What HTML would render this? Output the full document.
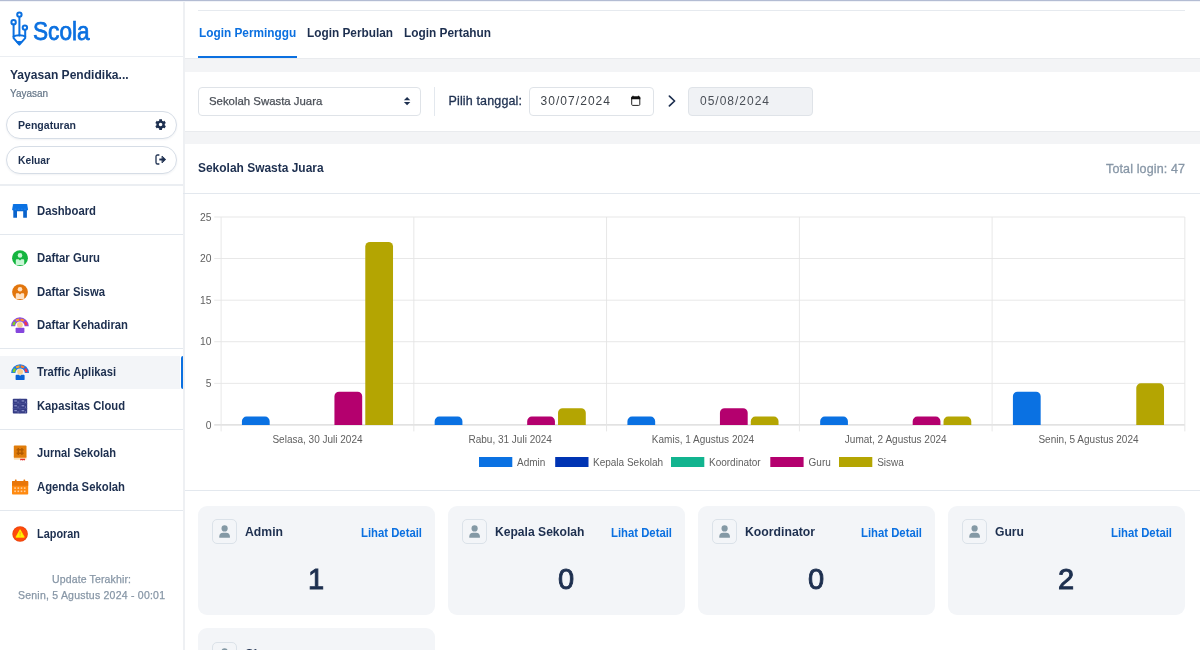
<!DOCTYPE html>
<html lang="id"><head><meta charset="utf-8"><title>Scola - Traffic Aplikasi</title>
<style>
*{box-sizing:border-box;margin:0;padding:0}
html,body{width:1200px;height:650px;overflow:hidden;background:#fff}
body{position:relative;font-family:"Liberation Sans",sans-serif;color:#1d2f4f}
.t{position:absolute;transform-origin:0 50%;white-space:nowrap;line-height:20px;height:20px;font-family:"Liberation Sans",sans-serif}
.b{position:absolute}
.hl{position:absolute;height:1px;background:#e3e8ee}
.pill{position:absolute;left:6px;width:171px;height:28px;border:1px solid #d6dde6;border-radius:14px;background:#fff;box-shadow:0 1px 2px rgba(30,50,80,.06)}
.inp{position:absolute;top:86.6px;height:29px;border:1px solid #dfe3e8;border-radius:4px;background:#fff}
.card{position:absolute;width:237px;height:109px;background:#f3f5f8;border-radius:9px}
.ico{position:absolute;left:13.5px;top:13.3px;width:25px;height:25px;border:1px solid #dbe2e9;border-radius:5px;background:#f3f5f8}
svg{position:absolute;overflow:visible}
svg text{font-family:"Liberation Sans",sans-serif}
#app{position:absolute;left:0;top:0;width:1200px;height:650px;will-change:transform}

</style></head>
<body>
<div id="app">
<!-- top strip -->
<div class="b" style="left:0;top:0;width:1200px;height:1px;background:#b3bcd3"></div>
<div class="b" style="left:0;top:1px;width:1200px;height:1px;background:#f1f3f8"></div>

<!-- main background bands -->
<div class="b" style="left:185px;top:58.2px;width:1015px;height:13.7px;background:#f3f4f6;border-top:1px solid #e9ebee"></div>
<div class="b" style="left:185px;top:131px;width:1015px;height:13.1px;background:#f3f4f6;border-top:1px solid #e9ebee"></div>

<!-- sidebar -->
<div class="b" style="left:183px;top:2px;width:2px;height:648px;background:#eef0f3"></div>
<div class="hl" style="left:0;top:55.5px;width:183px;height:1.5px;background:#ebeef2"></div>
<div class="hl" style="left:0;top:184.2px;width:183px;height:1.6px;background:#ebeef2"></div>
<div class="hl" style="left:0;top:234px;width:183px"></div>
<div class="hl" style="left:0;top:348px;width:183px"></div>
<div class="hl" style="left:0;top:429px;width:183px"></div>
<div class="hl" style="left:0;top:510px;width:183px"></div>
<div class="b" style="left:0;top:355.7px;width:179.5px;height:33.1px;background:#f3f5f8"></div>
<div class="b" style="left:180.8px;top:355.7px;width:2.6px;height:33.3px;background:#0b70e0;border-radius:2.5px 0 0 2.5px"></div>
<div class="pill" style="top:111px"></div>
<div class="pill" style="top:146px"></div>

<!-- tabs -->
<div class="hl" style="left:198px;top:10px;width:987px;background:#e6eaef"></div>
<div class="b" style="left:198px;top:56px;width:99px;height:2px;background:#0b70e0"></div>

<!-- filters -->
<div class="inp" style="left:198px;width:223px"></div>
<div class="b" style="left:434px;top:86.6px;width:1px;height:29px;background:#e3e8ee"></div>
<div class="inp" style="left:529px;width:125px"></div>
<div class="inp" style="left:688px;width:125px;background:#f0f2f5"></div>

<!-- chart header -->
<div class="hl" style="left:183px;top:193px;width:1017px"></div>
<div class="hl" style="left:185px;top:490px;width:1015px"></div>

<!-- cards -->
<div class="card" style="left:198px;top:506.1px"><div class="ico"><svg width="25" height="25" viewBox="0 0 25 25" style="left:-1px;top:-1px"><circle cx="12.600" cy="9.400" r="3.100" fill="#8499a5"/><path d="M7.300 18.800V17.600Q7.300 13.800 11.100 13.800H14.100Q17.900 13.800 17.900 17.600V18.800Z" fill="#8499a5"/></svg></div></div>
<div class="card" style="left:448px;top:506.1px"><div class="ico"><svg width="25" height="25" viewBox="0 0 25 25" style="left:-1px;top:-1px"><circle cx="12.600" cy="9.400" r="3.100" fill="#8499a5"/><path d="M7.300 18.800V17.600Q7.300 13.800 11.100 13.800H14.100Q17.900 13.800 17.900 17.600V18.800Z" fill="#8499a5"/></svg></div></div>
<div class="card" style="left:698px;top:506.1px"><div class="ico"><svg width="25" height="25" viewBox="0 0 25 25" style="left:-1px;top:-1px"><circle cx="12.600" cy="9.400" r="3.100" fill="#8499a5"/><path d="M7.300 18.800V17.600Q7.300 13.800 11.100 13.800H14.100Q17.900 13.800 17.900 17.600V18.800Z" fill="#8499a5"/></svg></div></div>
<div class="card" style="left:948px;top:506.1px"><div class="ico"><svg width="25" height="25" viewBox="0 0 25 25" style="left:-1px;top:-1px"><circle cx="12.600" cy="9.400" r="3.100" fill="#8499a5"/><path d="M7.300 18.800V17.600Q7.300 13.800 11.100 13.800H14.100Q17.900 13.800 17.900 17.600V18.800Z" fill="#8499a5"/></svg></div></div>
<div class="card" style="left:198px;top:628.3px"><div class="ico"><svg width="25" height="25" viewBox="0 0 25 25" style="left:-1px;top:-1px"><circle cx="12.600" cy="9.400" r="3.100" fill="#8499a5"/><path d="M7.300 18.800V17.600Q7.300 13.800 11.100 13.800H14.100Q17.900 13.800 17.900 17.600V18.800Z" fill="#8499a5"/></svg></div></div>
<svg width="1200" height="650" viewBox="0 0 1200 650" style="left:0;top:0">
<rect x="214.2" y="424.25" width="970.6" height="1.3" fill="#d9d9d9"/>
<rect x="214.2" y="382.87" width="970.6" height="0.9" fill="#e5e5e5"/>
<rect x="214.2" y="341.29" width="970.6" height="0.9" fill="#e5e5e5"/>
<rect x="214.2" y="299.71" width="970.6" height="0.9" fill="#e5e5e5"/>
<rect x="214.2" y="258.13" width="970.6" height="0.9" fill="#e5e5e5"/>
<rect x="214.2" y="216.55" width="970.6" height="0.9" fill="#e5e5e5"/>
<rect x="220.65" y="217.0" width="0.9" height="214.4" fill="#e5e5e5"/>
<rect x="413.40" y="217.0" width="0.9" height="214.4" fill="#e5e5e5"/>
<rect x="606.15" y="217.0" width="0.9" height="214.4" fill="#e5e5e5"/>
<rect x="798.90" y="217.0" width="0.9" height="214.4" fill="#e5e5e5"/>
<rect x="991.65" y="217.0" width="0.9" height="214.4" fill="#e5e5e5"/>
<rect x="1184.40" y="217.0" width="0.9" height="214.4" fill="#e5e5e5"/>
<text x="211.5" y="428.5" font-size="10.3" fill="#606060" text-anchor="end">0</text>
<text x="211.5" y="386.9" font-size="10.3" fill="#606060" text-anchor="end">5</text>
<text x="211.5" y="345.3" font-size="10.3" fill="#606060" text-anchor="end">10</text>
<text x="211.5" y="303.8" font-size="10.3" fill="#606060" text-anchor="end">15</text>
<text x="211.5" y="262.2" font-size="10.3" fill="#606060" text-anchor="end">20</text>
<text x="211.5" y="220.6" font-size="10.3" fill="#606060" text-anchor="end">25</text>
<path d="M241.92 424.90V421.18A4.60 4.60 0 0 1 246.52 416.58H265.07A4.60 4.60 0 0 1 269.67 421.18V424.90Z" fill="#0a71e2"/>
<path d="M334.44 424.90V396.24A4.60 4.60 0 0 1 339.04 391.64H357.59A4.60 4.60 0 0 1 362.19 396.24V424.90Z" fill="#b4006e"/>
<path d="M365.28 424.90V246.55A4.60 4.60 0 0 1 369.88 241.95H388.43A4.60 4.60 0 0 1 393.03 246.55V424.90Z" fill="#b4a502"/>
<path d="M434.67 424.90V421.18A4.60 4.60 0 0 1 439.27 416.58H457.82A4.60 4.60 0 0 1 462.42 421.18V424.90Z" fill="#0a71e2"/>
<path d="M527.19 424.90V421.18A4.60 4.60 0 0 1 531.79 416.58H550.34A4.60 4.60 0 0 1 554.94 421.18V424.90Z" fill="#b4006e"/>
<path d="M558.03 424.90V412.87A4.60 4.60 0 0 1 562.63 408.27H581.18A4.60 4.60 0 0 1 585.78 412.87V424.90Z" fill="#b4a502"/>
<path d="M627.42 424.90V421.18A4.60 4.60 0 0 1 632.02 416.58H650.57A4.60 4.60 0 0 1 655.17 421.18V424.90Z" fill="#0a71e2"/>
<path d="M719.94 424.90V412.87A4.60 4.60 0 0 1 724.54 408.27H743.09A4.60 4.60 0 0 1 747.69 412.87V424.90Z" fill="#b4006e"/>
<path d="M750.78 424.90V421.18A4.60 4.60 0 0 1 755.38 416.58H773.93A4.60 4.60 0 0 1 778.53 421.18V424.90Z" fill="#b4a502"/>
<path d="M820.17 424.90V421.18A4.60 4.60 0 0 1 824.77 416.58H843.32A4.60 4.60 0 0 1 847.92 421.18V424.90Z" fill="#0a71e2"/>
<path d="M912.69 424.90V421.18A4.60 4.60 0 0 1 917.29 416.58H935.84A4.60 4.60 0 0 1 940.44 421.18V424.90Z" fill="#b4006e"/>
<path d="M943.53 424.90V421.18A4.60 4.60 0 0 1 948.13 416.58H966.68A4.60 4.60 0 0 1 971.28 421.18V424.90Z" fill="#b4a502"/>
<path d="M1012.92 424.90V396.24A4.60 4.60 0 0 1 1017.52 391.64H1036.07A4.60 4.60 0 0 1 1040.67 396.24V424.90Z" fill="#0a71e2"/>
<path d="M1136.28 424.90V387.92A4.60 4.60 0 0 1 1140.88 383.32H1159.43A4.60 4.60 0 0 1 1164.03 387.92V424.90Z" fill="#b4a502"/>
<text x="317.5" y="443.4" font-size="10" fill="#606060" text-anchor="middle">Selasa, 30 Juli 2024</text>
<text x="510.2" y="443.4" font-size="10" fill="#606060" text-anchor="middle">Rabu, 31 Juli 2024</text>
<text x="703.0" y="443.4" font-size="10" fill="#606060" text-anchor="middle">Kamis, 1 Agustus 2024</text>
<text x="895.7" y="443.4" font-size="10" fill="#606060" text-anchor="middle">Jumat, 2 Agustus 2024</text>
<text x="1088.5" y="443.4" font-size="10" fill="#606060" text-anchor="middle">Senin, 5 Agustus 2024</text>
<rect x="479" y="457" width="33.3" height="10" fill="#0a71e2"/>
<text x="517" y="465.6" font-size="10" fill="#606060">Admin</text>
<rect x="555.2" y="457" width="33.3" height="10" fill="#0034b3"/>
<text x="593" y="465.6" font-size="10" fill="#606060">Kepala Sekolah</text>
<rect x="671" y="457" width="33.3" height="10" fill="#12b48f"/>
<text x="709" y="465.6" font-size="10" fill="#606060">Koordinator</text>
<rect x="770.3" y="457" width="33.3" height="10" fill="#b4006e"/>
<text x="808.6" y="465.6" font-size="10" fill="#606060">Guru</text>
<rect x="839" y="457" width="33.3" height="10" fill="#b4a502"/>
<text x="877.2" y="465.6" font-size="10" fill="#606060">Siswa</text>
</svg>
<!-- logo icon -->
<svg width="22" height="38" viewBox="8 9 22 38" style="left:8px;top:9px" fill="none" stroke="#0b70e0" stroke-width="2" stroke-linecap="round" stroke-linejoin="round">
<circle cx="19.4" cy="14.6" r="2.2"/><circle cx="13.6" cy="22.3" r="2.2"/><circle cx="24.9" cy="27.6" r="2.2"/>
<path d="M19.4 16.9V35.4M13.6 24.6V38.2L19.4 44.6L25.2 38.2V29.9"/>
<path d="M13.6 36.6C15.6 34.9 23.2 34.9 25.2 36.6"/>
<path d="M16.6 41.6H22.2L19.4 44.6Z" fill="#0b70e0" stroke-width="1"/>
</svg>

<!-- gear -->
<svg width="11.2" height="11.2" viewBox="0 0 512 512" style="left:154.7px;top:118.7px"><path fill="#1d2f4f" d="M487.4 315.700l-42.600-24.600c4.300-23.200 4.300-47 0-70.200l42.600-24.600c4.900-2.800 7.100-8.600 5.500-14-11.100-35.600-30-67.800-54.700-94.600-3.800-4.100-10-5.100-14.800-2.300L380.800 110c-17.900-15.400-38.500-27.300-60.800-35.100V25.800c0-5.600-3.900-10.500-9.400-11.700-36.700-8.200-74.300-7.800-109.200 0-5.500 1.200-9.400 6.100-9.400 11.700V75c-22.200 7.900-42.800 19.800-60.800 35.100L88.700 85.500c-4.900-2.800-11-1.900-14.800 2.300-24.700 26.700-43.600 58.900-54.700 94.600-1.700 5.400.6 11.200 5.500 14L67.300 221c-4.300 23.200-4.300 47 0 70.200l-42.600 24.600c-4.900 2.800-7.100 8.600-5.500 14 11.100 35.600 30 67.800 54.700 94.600 3.800 4.100 10 5.100 14.800 2.300l42.600-24.600c17.900 15.400 38.500 27.300 60.800 35.100v49.200c0 5.600 3.900 10.500 9.400 11.700 36.700 8.200 74.300 7.800 109.200 0 5.500-1.200 9.400-6.100 9.400-11.700v-49.200c22.200-7.900 42.800-19.800 60.800-35.100l42.600 24.600c4.900 2.800 11 1.900 14.800-2.300 24.700-26.700 43.600-58.900 54.700-94.600 1.500-5.500-.7-11.300-5.600-14.100zM256 336c-44.100 0-80-35.900-80-80s35.900-80 80-80 80 35.900 80 80-35.900 80-80 80z"/></svg>

<!-- logout -->
<svg width="12" height="11" viewBox="0 0 12 11" style="left:154.5px;top:153.7px" fill="none" stroke="#1d2f4f" stroke-linecap="round" stroke-linejoin="round">
<path d="M3.9 1H2.6Q1 1 1 2.6V8.4Q1 10 2.6 10H3.9" stroke-width="1.3"/>
<path d="M4.3 5.5H8.6" stroke-width="1.9" stroke-linecap="butt"/>
<path d="M7.3 2.3L10.7 5.5L7.3 8.700Z" fill="#1d2f4f" stroke-width="0.8"/>
</svg>

<!-- dashboard -->
<svg width="18" height="16" viewBox="11 203 18 16" style="left:11px;top:203px">
<path d="M13.300 210H26.900V217.800H23.200V211.300H17V217.800H13.300Z" fill="#0a63cb"/>
<path d="M13.600 204H26.600Q27.100 204 27.200 204.500L28 209.200Q28 210.400 26.800 210.400H13.400Q12.200 210.400 12.200 209.200L13 204.500Q13.100 204 13.600 204Z" fill="#0b72e3"/>
<path d="M14.600 209.200H16.200M17.800 209.200H19.400M21 209.200H22.600M24.200 209.200H25.800" stroke="#3b8eee" stroke-width="0.600"/>
</svg>

<!-- daftar guru -->
<svg width="18" height="18" viewBox="11 249 18 18" style="left:11px;top:249.300px">
<circle cx="20" cy="258.200" r="7.900" fill="#14b53f"/>
<circle cx="20" cy="255.400" r="2.300" fill="#c9f7d6"/>
<path d="M16.800 259.300H18.700L20 260.500L21.300 259.300H23.200Q24.200 259.300 24.200 260.300V264Q24.200 265 23.200 265H16.800Q15.800 265 15.800 264V260.300Q15.800 259.300 16.800 259.300Z" fill="#c9f7d6"/>
</svg>

<!-- daftar siswa -->
<svg width="18" height="18" viewBox="11 282.500 18 18" style="left:11px;top:282.700px">
<circle cx="20" cy="291.600" r="7.900" fill="#e2760d"/>
<circle cx="20" cy="288.800" r="2.300" fill="#ffe2c4"/>
<path d="M16.800 292.700H18.700L20 293.900L21.300 292.700H23.200Q24.200 292.700 24.200 293.700V297.400Q24.200 298.400 23.200 298.400H16.800Q15.800 298.400 15.800 297.400V293.700Q15.800 292.700 16.800 292.700Z" fill="#ffe2c4"/>
</svg>

<!-- daftar kehadiran -->
<svg width="20" height="18" viewBox="10 316 20 18" style="left:10px;top:316px">
<path d="M11 326.200A8.900 8.900 0 0 1 28.800 326.200H24.600A4.700 4.700 0 0 0 15.200 326.200Z" fill="#8a4ae0"/>
<path d="M12.300 325.300A7.600 7.600 0 0 1 13.900 321.200L15.800 322.600A5.300 5.300 0 0 0 14.800 325.300Z" fill="#7fd321"/>
<path d="M15.200 319.800A7.600 7.600 0 0 1 19.200 318.400L19.400 320.700A5.300 5.300 0 0 0 16.700 321.700Z" fill="#ffa31a"/>
<path d="M20.600 318.400A7.600 7.600 0 0 1 24.600 319.800L23.100 321.700A5.300 5.300 0 0 0 20.400 320.700Z" fill="#ff8c2a"/>
<path d="M25.900 321.200A7.600 7.600 0 0 1 27.500 325.300H25A5.300 5.300 0 0 0 24 322.600Z" fill="#f5364a"/>
<circle cx="19.900" cy="324.800" r="2.900" fill="#f8cf8e"/>
<rect x="15.600" y="327.700" width="8.800" height="5.200" rx="0.800" fill="#8546dd"/>
</svg>

<!-- traffic aplikasi -->
<svg width="20" height="18" viewBox="10 363.500 20 18" style="left:10px;top:363.300px">
<path d="M11.200 373.600A8.900 8.900 0 0 1 29 373.600H24.800A4.700 4.700 0 0 0 15.400 373.600Z" fill="#1a78e8"/>
<path d="M12.500 372.700A7.600 7.600 0 0 1 14.100 368.600L16 370A5.300 5.300 0 0 0 15 372.700Z" fill="#7fd321"/>
<path d="M15.400 367.200A7.600 7.600 0 0 1 19.400 365.800L19.600 368.100A5.300 5.300 0 0 0 16.900 369.100Z" fill="#ffa31a"/>
<path d="M20.800 365.800A7.600 7.600 0 0 1 24.800 367.200L23.300 369.100A5.300 5.300 0 0 0 20.600 368.100Z" fill="#ff7a2a"/>
<path d="M26.100 368.600A7.600 7.600 0 0 1 27.700 372.700H25.200A5.300 5.300 0 0 0 24.200 370Z" fill="#f5364a"/>
<circle cx="20.100" cy="372.300" r="2.900" fill="#f8cf8e"/>
<path d="M16.500 375.300H18.800L20.100 376.300L21.400 375.300H23.700Q24.600 375.300 24.600 376.200V379.700Q24.600 380.600 23.700 380.600H16.500Q15.600 380.600 15.600 379.700V376.200Q15.600 375.300 16.500 375.300Z" fill="#0b63d6"/>
</svg>

<!-- kapasitas cloud -->
<svg width="16" height="16" viewBox="12 397.500 16 16" style="left:12px;top:397.500px">
<rect x="12.800" y="398.200" width="14.400" height="14.800" rx="0.800" fill="#353c84"/>
<path d="M12.800 403.100H27.200M12.800 408H27.200M20 398.200V413" stroke="#4a5199" stroke-width="0.700"/>
<g fill="#aeb4e6"><rect x="14.300" y="400" width="2.600" height="0.900"/><rect x="21.600" y="400" width="2.600" height="0.900"/><rect x="14.300" y="404.900" width="2.600" height="0.900"/><rect x="21.600" y="404.900" width="2.600" height="0.900"/><rect x="14.300" y="409.800" width="2.600" height="0.900"/><rect x="21.600" y="409.800" width="2.600" height="0.900"/>
<rect x="17.600" y="401.200" width="0.900" height="0.900"/><rect x="24.900" y="401.200" width="0.900" height="0.900"/><rect x="17.600" y="406.100" width="0.900" height="0.900"/><rect x="24.900" y="406.100" width="0.900" height="0.900"/><rect x="17.600" y="411" width="0.900" height="0.900"/><rect x="24.900" y="411" width="0.900" height="0.900"/></g>
</svg>

<!-- jurnal sekolah -->
<svg width="15" height="17" viewBox="13 445 15 17" style="left:13px;top:445px">
<rect x="13.800" y="456" width="12.700" height="3.700" rx="0.600" fill="#fbe0b8"/>
<path d="M20.200 458.800H25V460.600L23.800 459.900L22.600 460.600L21.400 459.900L20.200 460.600Z" fill="#e8322a"/>
<rect x="13.800" y="445.500" width="12.700" height="12.300" rx="0.900" fill="#e07c0a"/>
<path d="M18.300 448V455M21.900 448V455M16.600 449.700H23.600M16.600 453.200H23.600" stroke="#b05a00" stroke-width="1.400" fill="none"/>
</svg>

<!-- agenda sekolah -->
<svg width="18" height="16" viewBox="11 478.500 18 16" style="left:11px;top:478.500px">
<rect x="14.900" y="479" width="1.700" height="3" rx="0.500" fill="#e8760a"/><rect x="23.500" y="479" width="1.700" height="3" rx="0.500" fill="#e8760a"/>
<rect x="12" y="480.500" width="16.200" height="13.500" rx="0.800" fill="#ff8a10"/>
<path d="M12 481.300Q12 480.500 12.800 480.500H27.400Q28.200 480.500 28.200 481.300V485.300H12Z" fill="#e8760a"/>
<g fill="#ffd0a0"><rect x="14.300" y="486.800" width="1.600" height="1.600"/><rect x="17.500" y="486.800" width="1.600" height="1.600"/><rect x="20.700" y="486.800" width="1.600" height="1.600"/><rect x="23.900" y="486.800" width="1.600" height="1.600"/><rect x="14.300" y="490" width="1.600" height="1.600"/><rect x="17.500" y="490" width="1.600" height="1.600"/><rect x="20.700" y="490" width="1.600" height="1.600"/><rect x="23.900" y="490" width="1.600" height="1.600"/></g>
</svg>

<!-- laporan -->
<svg width="18" height="18" viewBox="11 525 18 18" style="left:11px;top:525px">
<circle cx="20.100" cy="534" r="7.800" fill="#e8450f"/>
<circle cx="20.100" cy="534" r="7" fill="#ff4a0a"/>
<path d="M20.100 529.700L24.300 537.200H15.900Z" fill="#fff200" stroke="#fff200" stroke-width="0.800" stroke-linejoin="round"/>
<rect x="19.600" y="532" width="1" height="2.600" fill="#ff9a1a"/><rect x="19.600" y="535.300" width="1" height="1" fill="#ff9a1a"/>
</svg>

<!-- select arrows -->
<svg width="8" height="10" viewBox="402.500 96 8 10" style="left:402.500px;top:96px">
<path d="M403.400 100.200L406.600 97L409.800 100.200Z" fill="#1d2f4f"/><path d="M403.400 102L406.600 105.200L409.800 102Z" fill="#1d2f4f"/>
</svg>

<!-- date calendar icon -->
<svg width="12" height="12" viewBox="630 95 12 12" style="left:630px;top:95px">
<path d="M633 95.700V97.500M638.500 95.700V97.500" stroke="#111" stroke-width="1.200"/>
<rect x="631.700" y="97" width="8.100" height="8.400" rx="1" fill="none" stroke="#222" stroke-width="1"/>
<path d="M631.200 97.500Q631.200 96.500 632.200 96.500H639.300Q640.300 96.500 640.300 97.500V99.300H631.200Z" fill="#111"/>
</svg>

<!-- chevron -->
<svg width="10" height="14" viewBox="667 93.500 10 14" style="left:667px;top:93.500px">
<path d="M669.400 95.600L674.600 100.500L669.400 105.400" fill="none" stroke="#1d2f4f" stroke-width="1.700" stroke-linecap="round" stroke-linejoin="round"/>
</svg>

<!-- text layer -->
<span class="t" style="left:32.6px;top:21.30px;font-size:25.5px;font-weight:400;color:#0b70e0;transform:scaleX(0.8872);-webkit-text-stroke:0.75px #0b70e0;">Scola</span>
<span class="t" style="left:10px;top:65.20px;font-size:12.2px;font-weight:700;color:#1d2f4f;transform:scaleX(0.9891);">Yayasan Pendidika...</span>
<span class="t" style="left:10px;top:83.00px;font-size:10.5px;font-weight:400;color:#647587;transform:scaleX(0.9478);-webkit-text-stroke:0.2px #647587;">Yayasan</span>
<span class="t" style="left:18px;top:114.50px;font-size:11px;font-weight:700;color:#1d2f4f;transform:scaleX(0.9584);">Pengaturan</span>
<span class="t" style="left:18px;top:149.50px;font-size:11px;font-weight:700;color:#1d2f4f;transform:scaleX(0.9343);">Keluar</span>
<span class="t" style="left:37px;top:200.50px;font-size:12.5px;font-weight:700;color:#1d2f4f;transform:scaleX(0.9036);">Dashboard</span>
<span class="t" style="left:37px;top:248.00px;font-size:12.5px;font-weight:700;color:#1d2f4f;transform:scaleX(0.9071);">Daftar Guru</span>
<span class="t" style="left:37px;top:281.50px;font-size:12.5px;font-weight:700;color:#1d2f4f;transform:scaleX(0.9063);">Daftar Siswa</span>
<span class="t" style="left:37px;top:315.00px;font-size:12.5px;font-weight:700;color:#1d2f4f;transform:scaleX(0.9034);">Daftar Kehadiran</span>
<span class="t" style="left:37px;top:362.00px;font-size:12.5px;font-weight:700;color:#1d2f4f;transform:scaleX(0.8930);">Traffic Aplikasi</span>
<span class="t" style="left:37px;top:395.50px;font-size:12.5px;font-weight:700;color:#1d2f4f;transform:scaleX(0.8985);">Kapasitas Cloud</span>
<span class="t" style="left:37px;top:443.00px;font-size:12.5px;font-weight:700;color:#1d2f4f;transform:scaleX(0.8883);">Jurnal Sekolah</span>
<span class="t" style="left:37px;top:476.50px;font-size:12.5px;font-weight:700;color:#1d2f4f;transform:scaleX(0.9049);">Agenda Sekolah</span>
<span class="t" style="left:37px;top:524.00px;font-size:12.5px;font-weight:700;color:#1d2f4f;transform:scaleX(0.8720);">Laporan</span>
<span class="t" style="left:52px;top:569.00px;font-size:10.5px;font-weight:400;color:#8796a6;letter-spacing:0.143px;-webkit-text-stroke:0.25px #8796a6;">Update Terakhir:</span>
<span class="t" style="left:18px;top:585.00px;font-size:10.5px;font-weight:400;color:#8796a6;letter-spacing:0.225px;-webkit-text-stroke:0.25px #8796a6;">Senin, 5 Agustus 2024 - 00:01</span>
<span class="t" style="left:198.6px;top:23.20px;font-size:12.5px;font-weight:700;color:#0b70e0;transform:scaleX(0.9457);">Login Perminggu</span>
<span class="t" style="left:307px;top:23.00px;font-size:12.5px;font-weight:700;color:#1d2f4f;transform:scaleX(0.9452);">Login Perbulan</span>
<span class="t" style="left:404px;top:23.00px;font-size:12.5px;font-weight:700;color:#1d2f4f;transform:scaleX(0.9490);">Login Pertahun</span>
<span class="t" style="left:209px;top:91.00px;font-size:11.5px;font-weight:400;color:#4a4f57;transform:scaleX(0.9901);-webkit-text-stroke:0.25px #4a4f57;">Sekolah Swasta Juara</span>
<span class="t" style="left:448.5px;top:91.00px;font-size:12.5px;font-weight:400;color:#1d2f4f;letter-spacing:0.148px;-webkit-text-stroke:0.3px #1d2f4f;">Pilih tanggal:</span>
<span class="t" style="left:540.5px;top:91.00px;font-size:12px;font-weight:400;color:#3f444b;letter-spacing:1.049px;">30/07/2024</span>
<span class="t" style="left:700px;top:91.00px;font-size:12px;font-weight:400;color:#4a4f57;letter-spacing:0.993px;">05/08/2024</span>
<span class="t" style="left:198.4px;top:158.00px;font-size:12.5px;font-weight:700;color:#1d2f4f;transform:scaleX(0.9564);">Sekolah Swasta Juara</span>
<span class="t" style="left:1106px;top:158.50px;font-size:12.5px;font-weight:400;color:#8796a6;letter-spacing:0.133px;-webkit-text-stroke:0.3px #8796a6;">Total login: 47</span>
<span class="t" style="left:245px;top:522.00px;font-size:13px;font-weight:700;color:#1d2f4f;transform:scaleX(0.9394);">Admin</span>
<span class="t" style="left:361px;top:523.00px;font-size:12px;font-weight:700;color:#0b70e0;transform:scaleX(0.9430);">Lihat Detail</span>
<span class="t" style="left:316.2px;top:569.20px;font-size:29px;font-weight:400;color:#1d2f4f;transform:translateX(-50%);-webkit-text-stroke:0.95px #1d2f4f;">1</span>
<span class="t" style="left:495px;top:522.00px;font-size:13px;font-weight:700;color:#1d2f4f;transform:scaleX(0.9312);">Kepala Sekolah</span>
<span class="t" style="left:611px;top:523.00px;font-size:12px;font-weight:700;color:#0b70e0;transform:scaleX(0.9430);">Lihat Detail</span>
<span class="t" style="left:566.2px;top:569.20px;font-size:29px;font-weight:400;color:#1d2f4f;transform:translateX(-50%);-webkit-text-stroke:0.95px #1d2f4f;">0</span>
<span class="t" style="left:745px;top:522.00px;font-size:13px;font-weight:700;color:#1d2f4f;transform:scaleX(0.9410);">Koordinator</span>
<span class="t" style="left:861px;top:523.00px;font-size:12px;font-weight:700;color:#0b70e0;transform:scaleX(0.9430);">Lihat Detail</span>
<span class="t" style="left:816.2px;top:569.20px;font-size:29px;font-weight:400;color:#1d2f4f;transform:translateX(-50%);-webkit-text-stroke:0.95px #1d2f4f;">0</span>
<span class="t" style="left:995px;top:522.00px;font-size:13px;font-weight:700;color:#1d2f4f;transform:scaleX(0.9336);">Guru</span>
<span class="t" style="left:1111px;top:523.00px;font-size:12px;font-weight:700;color:#0b70e0;transform:scaleX(0.9430);">Lihat Detail</span>
<span class="t" style="left:1066.2px;top:569.20px;font-size:29px;font-weight:400;color:#1d2f4f;transform:translateX(-50%);-webkit-text-stroke:0.95px #1d2f4f;">2</span>
<span class="t" style="left:245px;top:644.20px;font-size:13px;font-weight:700;color:#1d2f4f;transform:scaleX(0.9767);">Siswa</span>
</div>
</body></html>
